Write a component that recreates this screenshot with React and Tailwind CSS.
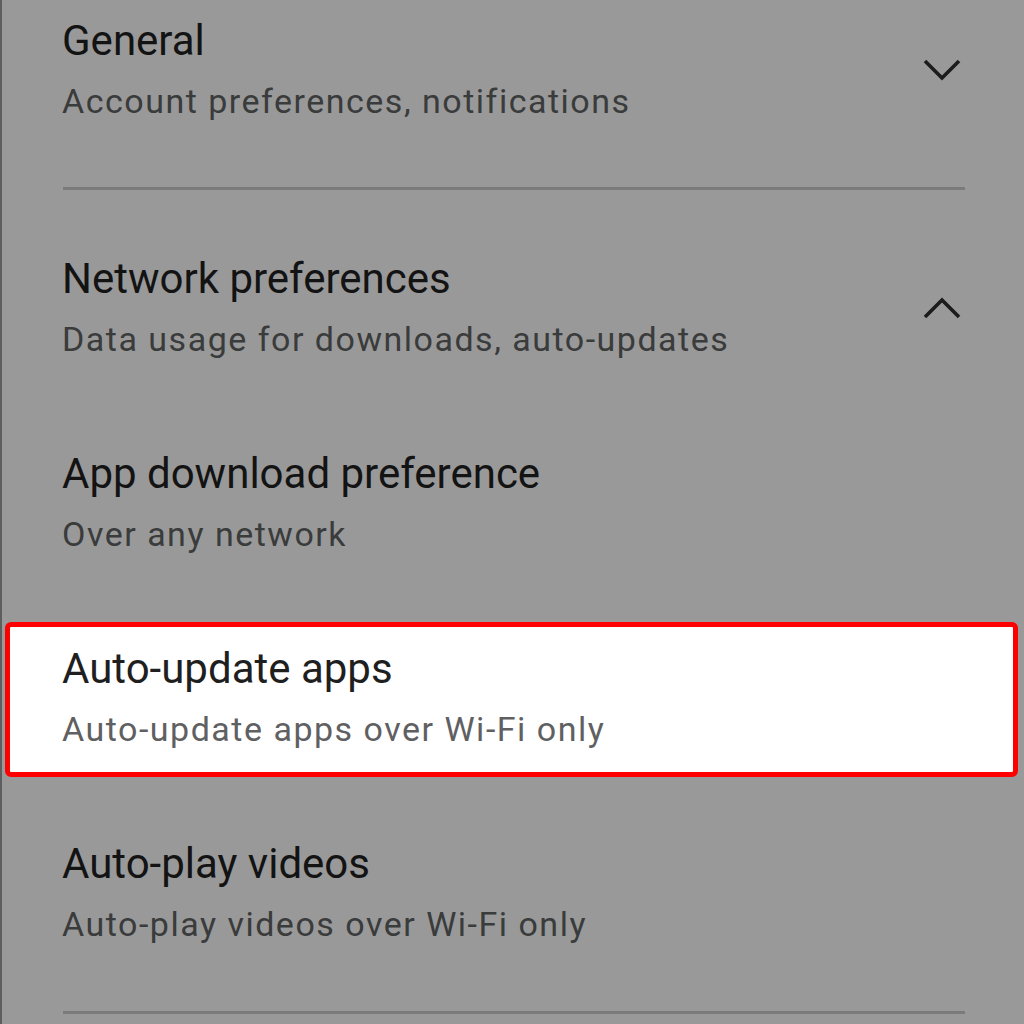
import React from "react";

function Chevron({ up }) {
  return (
    <svg width="64" height="40" viewBox="0 0 64 40" className="shrink-0 text-[#1c1c1c]">
      <polyline
        fill="none"
        stroke="currentColor"
        strokeWidth="3.6"
        points={up ? "15,29 32,12 49,29" : "15,11 32,28 49,11"}
      />
    </svg>
  );
}

function Item({ title, subtitle, active }) {
  return (
    <div className="flex flex-col">
      <div className={`text-[42px] leading-[48px] ${active ? "text-[#1f1f1f]" : "text-[#131313]"}`}>
        {title}
      </div>
      <div className={`mt-[14px] text-[34px] leading-[44px] tracking-[1.5px] ${active ? "text-[#5f6062]" : "text-[#3a3b3b]"}`}>
        {subtitle}
      </div>
    </div>
  );
}

function Divider() {
  return <div className="ml-[61px] mr-[59px] h-[3px] bg-[#7b7b7b]" />;
}

export default function App() {
  return (
    <div className="min-h-screen w-full overflow-hidden bg-[#999999] border-l-2 border-[#5e5e5e] font-['Roboto',sans-serif]">
      {/* General */}
      <div className="flex items-center justify-between pl-[60px] pr-[50px] pt-[17px] pb-[64px]">
        <Item title="General" subtitle="Account preferences, notifications" />
        <Chevron />
      </div>
      <Divider />

      {/* Network preferences */}
      <div className="flex items-center justify-between pl-[60px] pr-[50px] pt-[65px]">
        <Item title="Network preferences" subtitle="Data usage for downloads, auto-updates" />
        <Chevron up />
      </div>

      <div className="pl-[60px] pt-[89px]">
        <Item title="App download preference" subtitle="Over any network" />
      </div>

      <div className="ml-[3px] mr-[6px] mt-[66px] rounded-[6px] border-[5px] border-[#ff0000] bg-white pl-[52px] pt-[18px] pb-[21px]">
        <Item title="Auto-update apps" subtitle="Auto-update apps over Wi-Fi only" active />
      </div>

      <div className="pl-[60px] pt-[63px] pb-[65px]">
        <Item title="Auto-play videos" subtitle="Auto-play videos over Wi-Fi only" />
      </div>
      <Divider />
    </div>
  );
}
